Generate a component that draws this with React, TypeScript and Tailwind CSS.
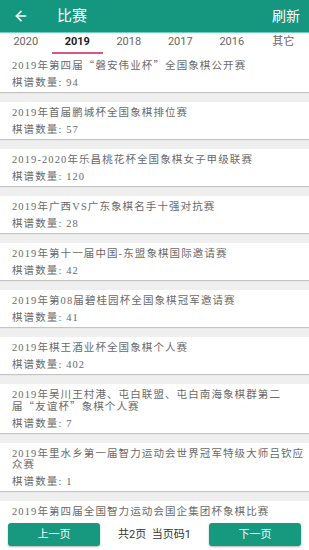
import { ArrowLeft } from "lucide-react";

interface Match {
  title: string[];
  count: number;
}

const years = ["2020", "2019", "2018", "2017", "2016", "其它"];

const matches: Match[] = [
  { title: ["2019年第四届“磐安伟业杯”全国象棋公开赛"], count: 94 },
  { title: ["2019年首届鹏城杯全国象棋排位赛"], count: 57 },
  { title: ["2019-2020年乐昌桃花杯全国象棋女子甲级联赛"], count: 120 },
  { title: ["2019年广西VS广东象棋名手十强对抗赛"], count: 28 },
  { title: ["2019年第十一届中国-东盟象棋国际邀请赛"], count: 42 },
  { title: ["2019年第08届碧桂园杯全国象棋冠军邀请赛"], count: 41 },
  { title: ["2019年棋王酒业杯全国象棋个人赛"], count: 402 },
  {
    title: ["2019年吴川王村港、屯白联盟、屯白南海象棋群第二", "届“友谊杯”象棋个人赛"],
    count: 7,
  },
  {
    title: ["2019年里水乡第一届智力运动会世界冠军特级大师吕钦应", "众赛"],
    count: 1,
  },
  { title: ["2019年第四届全国智力运动会国企集团杯象棋比赛"], count: 5 },
];

// quotes come from the CJK font so they keep their full width
const withQuotes = (line: string) =>
  line.split(/([“”])/).map((part, i) =>
    part === "“" || part === "”" ? (
      <span key={i} className="font-['Noto_Sans_CJK_SC']">
        {part}
      </span>
    ) : (
      <span key={i}>{part}</span>
    ),
  );

const MatchCard = ({ match }: { match: Match }) => (
  <div className="bg-white px-[12px] pt-[5px] shadow-[0_1px_1px_rgba(0,0,0,0.18)] mb-[10px]">
    <div className="pb-[3px]">
      {match.title.map((line) => (
        <div key={line} className="leading-[11px] whitespace-nowrap">
          {withQuotes(line)}
        </div>
      ))}
    </div>
    <div className="leading-[18px]">棋谱数量: {match.count}</div>
  </div>
);

export default function App() {
  return (
    <div className="w-[309px] h-[550px] flex flex-col overflow-hidden bg-[#efefef] font-['Roboto','Noto_Sans_CJK_SC',sans-serif]">
      {/* Header */}
      <div className="h-[33px] shrink-0 bg-[#15967f] border-b border-[#6ccfbf] flex items-center text-white">
        <ArrowLeft size={16} strokeWidth={2.4} className="ml-[13px]" />
        <span className="ml-[28px] text-[15px] leading-none">比赛</span>
        <span className="ml-auto mr-[9px] text-[14px] leading-none">刷新</span>
      </div>

      {/* Year tabs */}
      <div className="h-[21px] shrink-0 bg-white flex">
        {years.map((y) => {
          const active = y === "2019";
          return (
            <div
              key={y}
              className={
                active
                  ? "flex-1 flex items-center justify-center text-[11px] font-bold text-[#222] border-b-2 border-[#d9577e]"
                  : "flex-1 flex items-center justify-center text-[11px] text-[#666] border-b-2 border-transparent"
              }
            >
              {y}
            </div>
          );
        })}
      </div>

      {/* List */}
      <div className="flex-1 overflow-hidden text-[10.5px] tracking-[1.1px] text-[#6a6a6a] font-['Liberation_Serif','Noto_Sans_CJK_SC',serif]">
        {matches.map((m) => (
          <MatchCard key={m.title[0]} match={m} />
        ))}
      </div>

      {/* Pager */}
      <div className="h-[31px] shrink-0 bg-white flex items-center justify-between px-[8px]">
        <button className="w-[92px] h-[23px] rounded-[3px] bg-[#17997f] text-white text-[11px] leading-[23px] shadow-[0_1px_2px_rgba(0,0,0,0.3)]">
          上一页
        </button>
        <span className="text-[11px] leading-[14px] text-[#333] whitespace-pre">共2页  当页码1</span>
        <button className="w-[92px] h-[23px] rounded-[3px] bg-[#17997f] text-white text-[11px] leading-[23px] shadow-[0_1px_2px_rgba(0,0,0,0.3)]">
          下一页
        </button>
      </div>
    </div>
  );
}
